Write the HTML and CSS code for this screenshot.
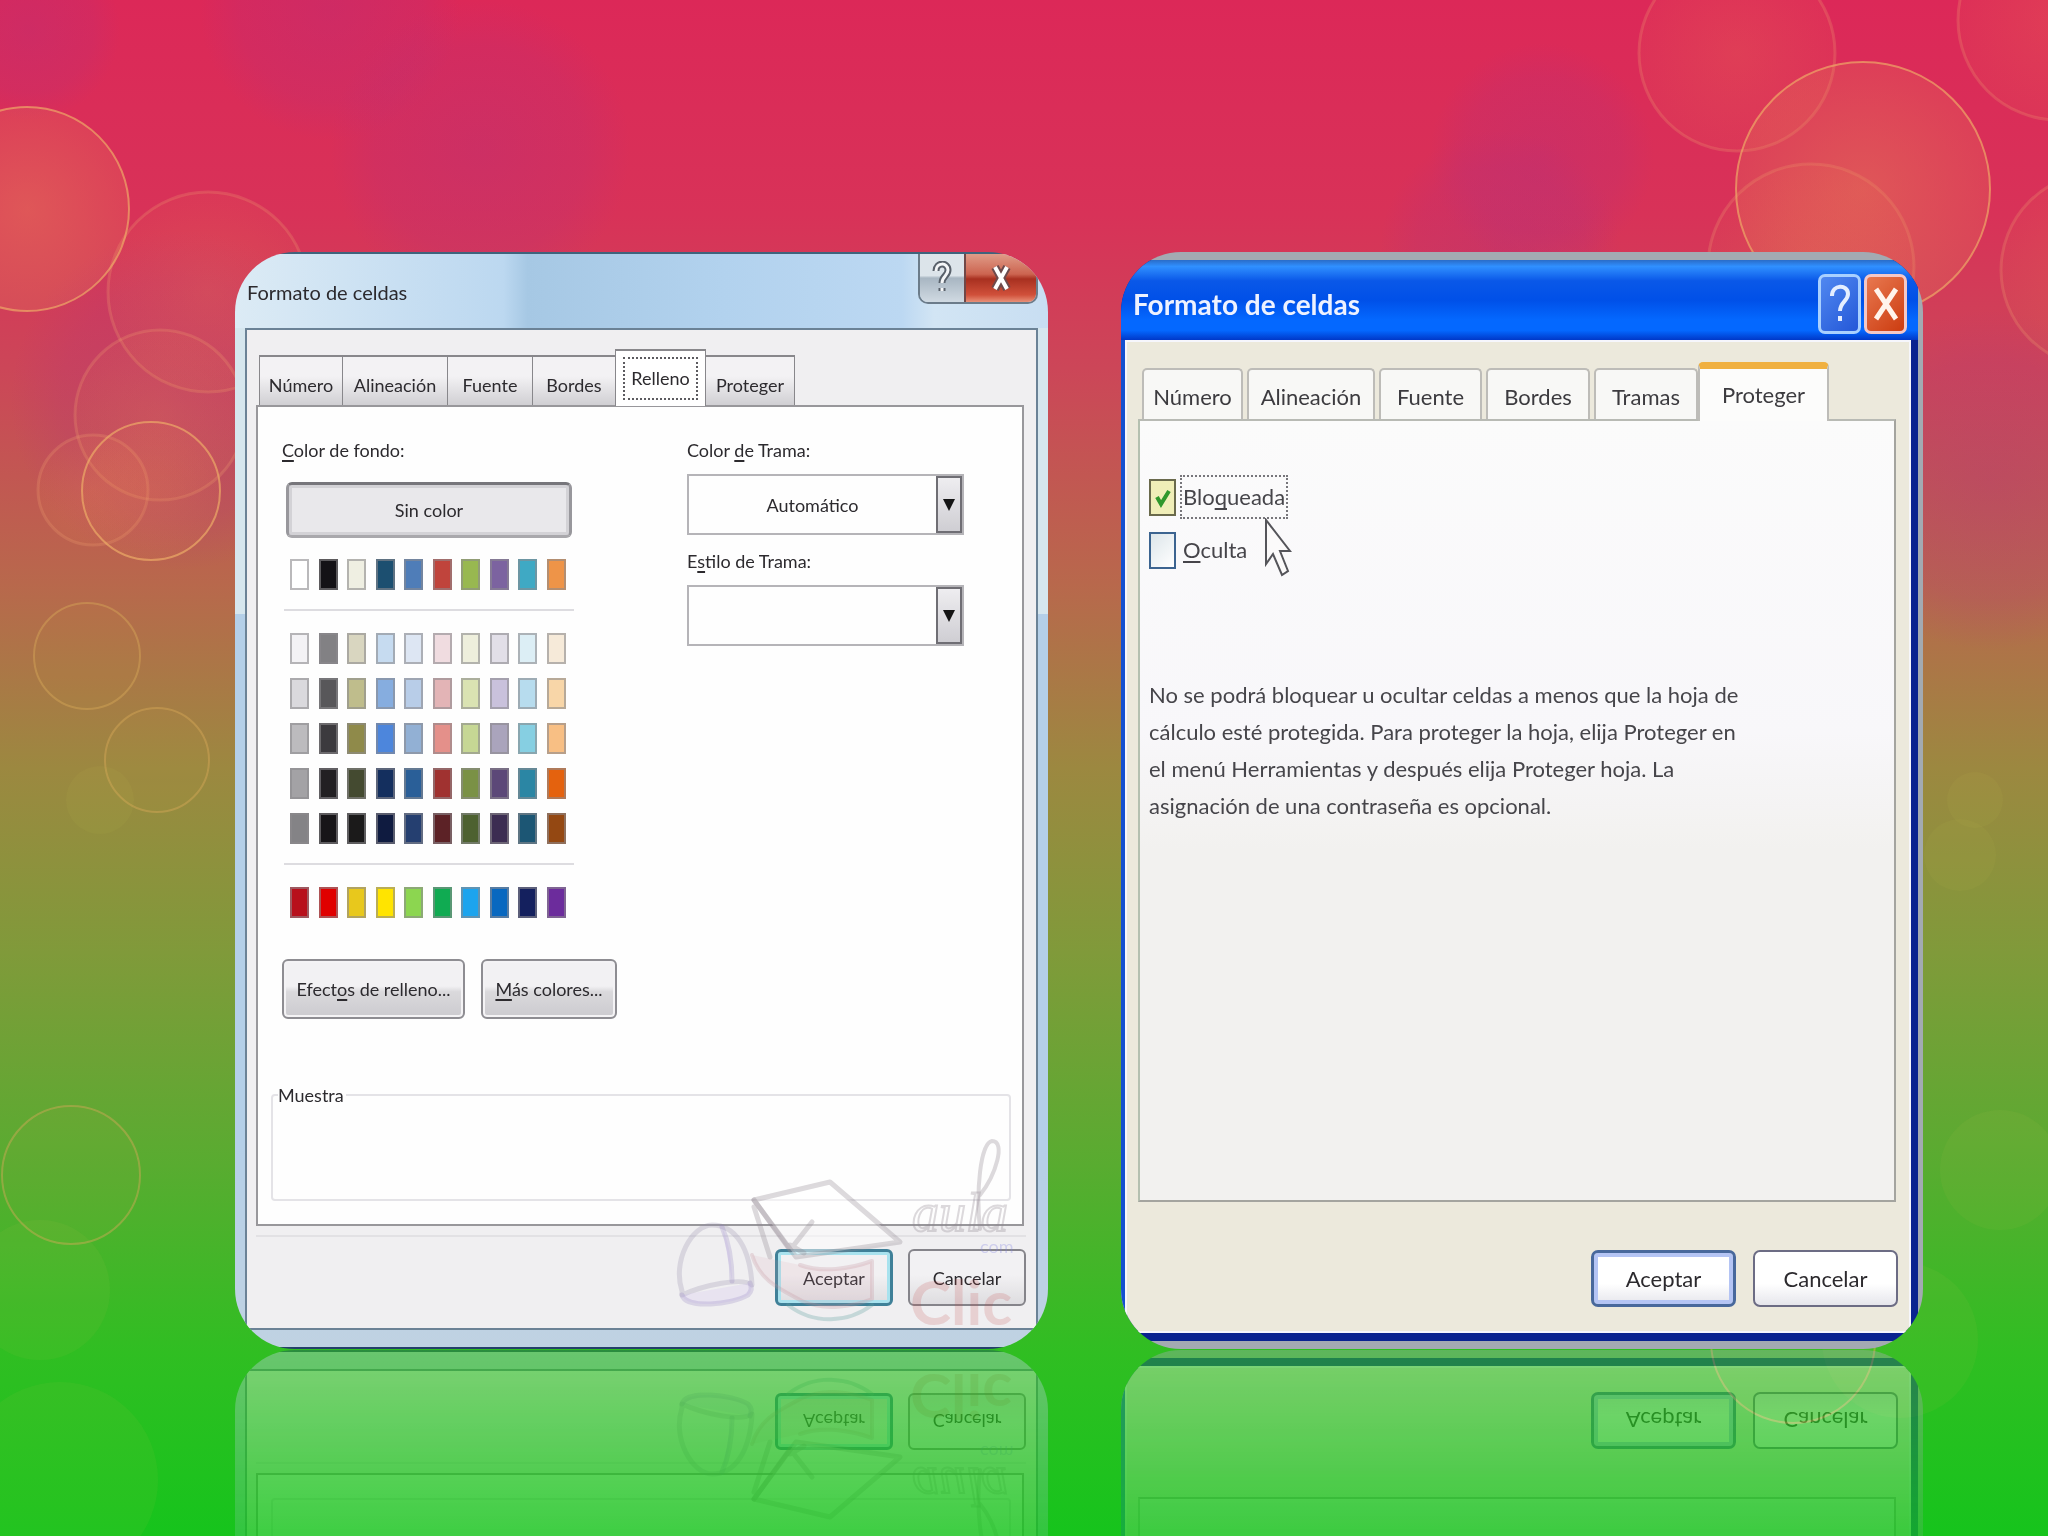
FILE: index.html
```html
<!DOCTYPE html>
<html lang="es">
<head>
<meta charset="utf-8">
<title>Formato de celdas</title>
<link rel="stylesheet" href="styles.css">
</head>
<body>
<main class="slide">
  <svg class="bokeh" viewBox="0 0 2048 1536" preserveAspectRatio="xMidYMid slice" aria-hidden="true">
    <defs>
      <radialGradient id="glow"><stop offset="0" stop-color="#f08a50" stop-opacity=".2"/><stop offset="1" stop-color="#f08a50" stop-opacity=".08"/></radialGradient>
      <radialGradient id="warm"><stop offset="0" stop-color="#e88a58" stop-opacity=".42"/><stop offset="1" stop-color="#e88a58" stop-opacity=".2"/></radialGradient>
      <radialGradient id="violet"><stop offset="0" stop-color="#b03080" stop-opacity=".3"/><stop offset=".7" stop-color="#b03080" stop-opacity=".18"/><stop offset="1" stop-color="#b03080" stop-opacity="0"/></radialGradient>
    </defs>
    <g fill="url(#violet)">
      <circle cx="1542" cy="155" r="112"/><circle cx="330" cy="10" r="130"/><circle cx="480" cy="150" r="150"/>
      <circle cx="1500" cy="250" r="120"/><circle cx="180" cy="400" r="170"/><circle cx="30" cy="30" r="90"/><circle cx="1990" cy="480" r="170"/>
    </g>
    <g fill="url(#glow)" stroke="#f0a070" stroke-opacity=".25" stroke-width="3">
      <circle cx="208" cy="292" r="100"/><circle cx="160" cy="415" r="85"/><circle cx="93" cy="490" r="55"/>
      <circle cx="1737" cy="53" r="98"/><circle cx="1811" cy="267" r="103"/><circle cx="2058" cy="20" r="100"/><circle cx="2098" cy="270" r="97"/>
    </g>
    <g stroke="#f0b068" stroke-opacity=".65" stroke-width="2">
      <circle cx="27" cy="209" r="102" fill="url(#warm)"/><circle cx="151" cy="491" r="69" fill="url(#glow)"/><circle cx="1863" cy="189" r="127" fill="url(#warm)"/>
    </g>
    <g fill="#c8b040" fill-opacity=".06" stroke="#d8a858" stroke-opacity=".45" stroke-width="2">
      <circle cx="87" cy="656" r="53"/><circle cx="157" cy="760" r="52"/><circle cx="71" cy="1175" r="69"/>
    </g>
    <g fill="#c0c850" fill-opacity=".07">
      <circle cx="100" cy="800" r="34"/><circle cx="1960" cy="855" r="36"/><circle cx="1975" cy="800" r="28"/>
      <circle cx="2000" cy="1170" r="60"/><circle cx="1900" cy="1340" r="78"/><circle cx="60" cy="1480" r="98"/><circle cx="40" cy="1290" r="70"/>
      <circle cx="1793" cy="1341" r="82" stroke="#d8b050" stroke-opacity=".5" stroke-width="2"/>
    </g>
  </svg>

  <section class="dialog aero" aria-label="Formato de celdas, Relleno">
    <header class="aero-title">
      <h1 class="aero-name">Formato de celdas</h1>
      <div class="aero-controls">
        <button class="aero-help" type="button" aria-label="Ayuda">
          <svg width="20" height="34" viewBox="0 0 20 34"><path d="M4 10C4 1 16 1 16 9c0 6-6 6-6 13M10 27v3" fill="none" stroke="#59616b" stroke-width="7"/><path d="M4 10C4 1 16 1 16 9c0 6-6 6-6 13M10 27v3" fill="none" stroke="#f4f6f8" stroke-width="3"/></svg>
        </button>
        <button class="aero-close" type="button" aria-label="Cerrar">
          <svg width="22" height="30" viewBox="0 0 22 30"><path d="M5 4l12 22M17 4L5 26" stroke="#6e4a4c" stroke-width="8"/><path d="M5 4l12 22M17 4L5 26" stroke="#fff" stroke-width="4"/></svg>
        </button>
      </div>
    </header>
    <div class="aero-client">
      <div class="aero-tabs" role="tablist">
        <button class="aero-tab" role="tab" type="button">Número</button>
        <button class="aero-tab" role="tab" type="button">Alineación</button>
        <button class="aero-tab" role="tab" type="button">Fuente</button>
        <button class="aero-tab" role="tab" type="button">Bordes</button>
        <button class="aero-tab is-active" role="tab" type="button" aria-selected="true"><span class="focus">Relleno</span></button>
        <button class="aero-tab" role="tab" type="button">Proteger</button>
      </div>
      <div class="aero-panel">
        <div class="fill-form">
          <div class="fill-color">
            <p class="caption"><u>C</u>olor de fondo:</p>
            <button class="no-color" type="button">Sin color</button>
            <div class="swatches" id="theme"></div>
            <hr class="rule">
            <div class="swatches" id="tints"></div>
            <hr class="rule">
            <div class="swatches" id="standard"></div>
            <div class="more">
              <button class="aero-button effects" type="button">Efect<u>o</u>s de relleno...</button>
              <button class="aero-button colors" type="button"><u>M</u>ás colores...</button>
            </div>
          </div>
          <div class="fill-pattern">
            <label class="caption" for="pcolor">Color <u>d</u>e Trama:</label>
            <div class="combo">
              <select id="pcolor"><option>Automático</option></select>
              <span class="combo-arrow"><svg width="12" height="14" viewBox="0 0 12 14"><path d="M0 1h12L6 13z" fill="#151515"/></svg></span>
            </div>
            <label class="caption caption-next" for="pstyle">E<u>s</u>tilo de Trama:</label>
            <div class="combo">
              <select id="pstyle"><option></option></select>
              <span class="combo-arrow"><svg width="12" height="14" viewBox="0 0 12 14"><path d="M0 1h12L6 13z" fill="#151515"/></svg></span>
            </div>
          </div>
        </div>
        <fieldset class="sample"><legend>Muestra</legend></fieldset>
      </div>
      <footer class="aero-footer">
        <button class="aero-action is-default" type="button">Aceptar</button>
        <button class="aero-action" type="button">Cancelar</button>
      </footer>
    </div>
    <svg class="watermark" width="364" height="232" viewBox="0 -56 364 232" aria-hidden="true">
      <g fill="none" stroke-linejoin="round" stroke-linecap="round">
        <path d="M84 37l76-18 70 60-104 15z" fill="#fff" fill-opacity=".5" stroke="#8d8490" stroke-opacity=".3" stroke-width="5"/>
        <path d="M84 37l36 50 22-28M120 82l14 8M84 44l16 50" stroke="#8d8490" stroke-opacity=".3" stroke-width="5"/>
        <path d="M82 92c8 26 28 34 50 46 22 10 50 6 70-2V98c-22 8-50 12-72 4" fill="#d8a0b0" fill-opacity=".15" stroke="#c08a98" stroke-opacity=".25" stroke-width="4"/>
        <path d="M118 142c26 20 60 18 84 0" stroke="#60a0a0" stroke-opacity=".3" stroke-width="4"/>
        <path d="M12 128C2 98 22 62 42 62c24 0 38 24 40 60-10-8-48 0-70 10z" stroke="#8f86a8" stroke-opacity=".25" stroke-width="5"/>
        <path d="M52 64c8 18 10 38 10 54M12 132c4 14 50 10 66 0 4-4 4-8 2-12" fill="#cfc0f0" fill-opacity=".25" stroke="#8f80c0" stroke-opacity=".25" stroke-width="5"/>
        <path d="M310 66C306 30 310-20 322-22c14 0 4 34-12 54" stroke="#8d8490" stroke-opacity=".3" stroke-width="4"/>
      </g>
      <text class="mark-aula" x="242" y="68">aula</text>
      <text class="mark-com" x="310" y="90">com</text>
      <text class="mark-clic" x="240" y="162">Clic</text>
    </svg>
  </section>

  <section class="dialog luna" aria-label="Formato de celdas, Proteger">
    <header class="luna-title">
      <h1 class="luna-name">Formato de celdas</h1>
      <div class="luna-controls">
        <button class="luna-help" type="button" aria-label="Ayuda">
          <svg width="24" height="40" viewBox="0 0 24 40"><path d="M4 12C4 0 20 0 20 10c0 7-8 8-8 17M12 32v5" fill="none" stroke="#e4eeff" stroke-width="4"/></svg>
        </button>
        <button class="luna-close" type="button" aria-label="Cerrar">
          <svg width="26" height="36" viewBox="0 0 26 36"><path d="M3 3l20 30M23 3L3 33" stroke="#fff4ec" stroke-width="5"/></svg>
        </button>
      </div>
    </header>
    <div class="luna-client">
      <div class="luna-tabs" role="tablist">
        <button class="luna-tab" role="tab" type="button">Número</button>
        <button class="luna-tab" role="tab" type="button">Alineación</button>
        <button class="luna-tab" role="tab" type="button">Fuente</button>
        <button class="luna-tab" role="tab" type="button">Bordes</button>
        <button class="luna-tab" role="tab" type="button">Tramas</button>
        <button class="luna-tab is-active" role="tab" type="button" aria-selected="true">Proteger</button>
      </div>
      <div class="luna-panel">
        <div class="check">
          <input type="checkbox" id="locked" checked>
          <label class="is-focused" for="locked">Blo<u>q</u>ueada</label>
          <svg class="pointer" width="28" height="60" viewBox="0 0 28 60" aria-hidden="true"><path d="M2 2v44l7-10 9 21 6-4-8-20h10z" fill="#fbfafa" stroke="#55555a" stroke-width="2"/></svg>
        </div>
        <div class="check">
          <input type="checkbox" id="hidden-cells">
          <label for="hidden-cells"><u>O</u>culta</label>
        </div>
        <p class="note">No se podrá bloquear u ocultar celdas a menos que la hoja de<br>cálculo esté protegida. Para proteger la hoja, elija Proteger en<br>el menú Herramientas y después elija Proteger hoja. La<br>asignación de una contraseña es opcional.</p>
      </div>
      <footer class="luna-footer">
        <button class="luna-action is-default" type="button">Aceptar</button>
        <button class="luna-action" type="button">Cancelar</button>
      </footer>
    </div>
  </section>
</main>
<script src="swatches.js"></script>
</body>
</html>
```
FILE: swatches.js
```js
const palettes = {
  theme: "#ffffff #141216 #efefe2 #1c4f70 #4f7db8 #c0443c #98b850 #7c63a0 #3fa9c4 #ee9448",
  tints: "#f3f2f5 #828184 #d9d6c0 #c6dbf0 #dde6f3 #f0dce0 #eeefdc #e2dfe8 #dceef5 #f6ead9 " +
    "#dad9dd #58575a #bfbd8c #86addf #b8cde8 #e3b4b6 #dae3b2 #c9c1dc #b7dcee #f8d6a8 " +
    "#bcbbbe #3c3a3e #8f8a4a #4d86dc #92b0d4 #e4908a #c6d794 #aaa4bc #86cfe2 #f8bf84 " +
    "#a3a2a5 #222023 #444a30 #142f5e #2a5f98 #a03230 #7a9145 #5c4878 #2b86a4 #e4620e " +
    "#848386 #171518 #1b1a1a #0f1b40 #253f70 #5c2226 #4d6130 #3c2d52 #1c5674 #944812",
  standard: "#b8101c #e00000 #e8c81c #ffe400 #8cd650 #10ab52 #1ca4ee #0868c0 #14205e #6c2c9c"
};

for (const [id, colors] of Object.entries(palettes)) {
  const holder = document.getElementById(id);
  for (const color of colors.split(" ")) {
    const swatch = document.createElement("button");
    swatch.type = "button";
    swatch.className = "swatch";
    swatch.style.backgroundColor = color;
    swatch.setAttribute("aria-label", "Color " + color);
    holder.append(swatch);
  }
}
```
FILE: styles.css
```css
* { box-sizing: border-box; }

body {
  margin: 0;
  font-family: Lato, "Open Sans", sans-serif;
  font-size: 18px;
  line-height: 28px;
  color: #2c2a2e;
}

h1, p { margin: 0; font-weight: normal; }

button {
  font: inherit;
  color: inherit;
  padding: 0;
  margin: 0;
  white-space: nowrap;
}

u { text-decoration-thickness: 2px; text-underline-offset: 3px; text-decoration-skip-ink: none; }

.slide {
  position: relative;
  overflow: hidden;
  height: 100vh;
  min-height: 1400px;
  padding: 252px 125px 0 235px;
  display: grid;
  grid-template-columns: 813fr 802fr;
  align-items: stretch;
  align-content: start;
  column-gap: 73px;
  background: linear-gradient(#dc2858 0%, #d83258 14%, #cc4658 24%, #b8684c 38%, #9c8840 50%, #809a3a 62%, #58ac30 76%, #30be22 88%, #16c41c 100%);
}

.bokeh {
  position: absolute;
  inset: 0;
  width: 100%;
  height: 100%;
}

.dialog {
  position: relative;
  display: flex;
  flex-direction: column;
  overflow: hidden;
  -webkit-box-reflect: below 1px linear-gradient(transparent 70%, rgba(0, 0, 0, .4));
}

/* Glass window */
.aero {
  border-radius: 60px;
  padding: 2px 10px 19px;
  background:
    linear-gradient(#3f637c, #3f637c) top / 100% 2px no-repeat,
    linear-gradient(#24406a, #24406a) bottom / 100% 2px no-repeat,
    linear-gradient(90deg, #dcebf5 0, #c8dff2 20%, #bcd8f0 33%, #a6c8e4 36%, #b2d2ee 60%, #bcd8f2 82%, #d2e5f4 86%, #c8def2 100%) top / 100% 76px no-repeat,
    linear-gradient(#d6e6ee 0 33%, #b4cfe8 33% 80%, #c0d2e2);
}

.aero-title {
  height: 74px;
  display: flex;
  justify-content: space-between;
  align-items: flex-start;
}

.aero-name { font-size: 20px; line-height: 28px; padding: 24px 0 0 2px; }

.aero-controls {
  display: flex;
  width: 120px;
  height: 50px;
  border: 2px solid #6c7c8a;
  border-top: 0;
  border-radius: 0 0 10px 10px;
  overflow: hidden;
}

.aero-help, .aero-close { border: 0; display: grid; place-items: center; }
.aero-help { width: 44px; background: linear-gradient(#dce4ea 0 45%, #a8b6c2 50%, #d0dae2); }
.aero-close { flex: 1; border-left: 2px solid #704848; background: linear-gradient(#e09c88 0, #cc6450 42%, #a83020 52%, #d0503a 85%, #e89078); }

.aero-client {
  border: 2px solid #6b8296;
  background: #f0eff1;
  padding: 19px 10px 22px 9px;
}

.aero-tabs {
  display: grid;
  grid-template-columns: 83px 105px 85px 83px 90px 89px;
  align-items: end;
  padding-left: 3px;
}

.aero-tab {
  height: 50px;
  margin-right: -1px;
  padding-top: 8px;
  border: 1px solid #88878b;
  border-width: 2px 1px 0;
  background: linear-gradient(#f3f2f4 0 40%, #d0cfd3);
}

.aero-tab.is-active {
  height: 57px;
  padding: 0;
  margin-bottom: -1px;
  position: relative;
  z-index: 1;
  background: #fff;
}

.focus { display: inline-block; padding: 5px 6px 6px; border: 2px dotted #5c5b60; }

.aero-panel {
  margin-right: 2px;
  border: 2px solid #98979b;
  background: #fefefe;
  padding: 29px 11px 23px 13px;
}

.fill-form {
  display: grid;
  grid-template-columns: 405fr 324fr;
  padding-left: 11px;
}

.caption { display: block; height: 28px; }

.no-color {
  display: block;
  width: 286px;
  height: 56px;
  margin: 18px 0 21px 4px;
  border: 3px solid #8c8b90;
  border-color: #77767b #98979c #a9a8ac;
  border-radius: 6px;
  background: #e9e8eb;
  box-shadow: inset 0 0 0 3px #d3d2d6;
}

.swatches {
  width: 276px;
  margin-left: 8px;
  display: grid;
  grid-template-columns: repeat(10, 19px);
  grid-auto-rows: 31px;
  justify-content: space-between;
  row-gap: 14px;
}

.swatch { border: 2px solid rgba(140, 138, 142, .6); }

.rule {
  width: 290px;
  height: 2px;
  margin: 19px 0 22px 2px;
  border: 0;
  background: #dddce0;
}

.more { display: flex; gap: 16px; margin-top: 41px; }

.aero-button {
  height: 60px;
  border: 2px solid #8e8d92;
  border-radius: 6px;
  background: linear-gradient(#f2f1f3 0 45%, #dad9dc 55%, #cccbcf);
  box-shadow: inset 0 0 0 2px #f4f3f5;
}

.effects { width: 183px; }
.colors { width: 136px; }

.combo {
  display: grid;
  grid-template-columns: 1fr 26px;
  width: 277px;
  height: 61px;
  margin-top: 10px;
  border: 2px solid #b5b4b8;
}

.combo select {
  appearance: none;
  width: 100%;
  border: 0;
  padding: 0;
  background: none;
  font: inherit;
  color: inherit;
  text-align-last: center;
}

.combo-arrow {
  display: grid;
  place-items: center;
  border: 2px solid #6f6e74;
  background: linear-gradient(#eeedf0, #cfced3);
}

.caption-next { margin-top: 12px; }

.sample {
  height: 120px;
  margin: 62px 0 0;
  padding: 0;
  border: 2px solid #e4e3e7;
  border-radius: 4px;
}

.sample legend { margin-left: 5px; padding: 0 2px 0 0; }

.aero-footer {
  display: flex;
  justify-content: flex-end;
  gap: 15px;
  margin-top: 9px;
  padding-top: 12px;
  border-top: 2px solid #e2e1e4;
}

.aero-action {
  width: 118px;
  height: 57px;
  border: 2px solid #85848a;
  border-radius: 6px;
  background: linear-gradient(#f2f1f3 0 45%, #dedde0);
}

.aero-action.is-default { border: 3px solid #3f8098; box-shadow: inset 0 0 0 3px #a8e2ee; }

.watermark { position: absolute; right: 14px; bottom: 10px; pointer-events: none; }
.mark-aula { font: italic 54px "Liberation Serif", serif; fill: none; stroke: #8d8490; stroke-opacity: .3; stroke-width: 2px; }
.mark-com { font-size: 18px; fill: #8080e0; fill-opacity: .3; }
.mark-clic { font-size: 62px; font-weight: bold; fill: #c04040; fill-opacity: .18; }

/* Blue window */
.luna {
  padding: 8px 5px 8px 0;
  border-radius: 60px;
  background:
    linear-gradient(#0a2390, #0a2390) 0 8px / calc(100% - 5px) calc(100% - 16px) no-repeat,
    #a3aab2;
}

.luna-title {
  height: 80px;
  display: flex;
  justify-content: space-between;
  align-items: center;
  padding: 8px 11px 0 12px;
  background: linear-gradient(#2a6cc8 0, #3090ff 8%, #0a58e8 26%, #0050e8 50%, #0468ff 75%, #0468ff 88%, #0038c8 100%);
}

.luna-name { font-size: 28px; line-height: 40px; font-weight: bold; color: #eef2ff; }

.luna-controls { display: flex; gap: 3px; }

.luna-help, .luna-close {
  width: 43px;
  height: 60px;
  display: grid;
  place-items: center;
  border: 3px solid #a8d0ff;
  border-radius: 7px;
}

.luna-help { background: linear-gradient(135deg, #5088f0, #2458d8); }
.luna-close { border-color: #f4c8c8; background: linear-gradient(135deg, #e87850, #cc3c10); }

.luna-client {
  flex: 1;
  display: flex;
  flex-direction: column;
  margin: 0 7px 8px 0;
  border: solid #1450d0;
  border-width: 0 0 0 4px;
  padding: 22px 13px 26px;
  background: #ece9dc;
  box-shadow: inset -2px -2px 0 #f6f6fc, inset 2px 2px 0 #f6f6fc;
}

.luna-tabs {
  display: grid;
  grid-template-columns: 101px 128px 103px 104px 104px 127px;
  column-gap: 4px;
  align-items: end;
  padding-left: 4px;
}

.luna-tab {
  height: 51px;
  border: 2px solid #bdbcb8;
  border-bottom: 0;
  border-radius: 5px 5px 0 0;
  background: #f8f8f6;
  padding-top: 5px;
  font-size: 22px;
  color: #3c3b3f;
}

.luna-tab.is-active {
  position: relative;
  z-index: 1;
  height: 59px;
  margin: 0 0 -2px -4px;
  border-top: 7px solid #f0b040;
  background: #fcfcfb;
  padding-top: 0;
}

.luna-panel {
  flex: 1;
  margin-right: 2px;
  border: 2px solid #aeb0aa;
  border-color: #b8bab4 #a4a49f #a4a49f #b4c0b0;
  padding: 54px 9px 0;
  background: linear-gradient(#fbfbfb, #f8f7fa 40%, #f2f1ef 55%, #f2f1ef);
}

.check {
  position: relative;
  display: flex;
  align-items: center;
  height: 44px;
  margin-bottom: 9px;
  gap: 4px;
  font-size: 22px;
}

.check input {
  appearance: none;
  width: 27px;
  height: 37px;
  margin: 0;
  border: 2px solid #3c6490;
  background: linear-gradient(135deg, #dde6ea, #fff);
}

.check input:checked {
  border-color: #6a6a4c;
  background: url("data:image/svg+xml,%3Csvg xmlns='http://www.w3.org/2000/svg' viewBox='0 0 23 33'%3E%3Cpath d='M6 16l4 7 8-13' fill='none' stroke='%2330982c' stroke-width='4'/%3E%3C/svg%3E") center / 23px 33px no-repeat, #f0eeb8;
}

.check label { padding: 6px 1px; border: 2px dotted transparent; line-height: 28px; color: #46454a; }
.check label.is-focused { border-color: #77767b; }

.pointer { position: absolute; left: 115px; top: 43px; z-index: 1; }

.note { margin-top: 104px; font-size: 22px; line-height: 37px; color: #46454a; }

.luna-footer { display: flex; justify-content: flex-end; gap: 17px; padding-top: 48px; }

.luna-action {
  width: 145px;
  height: 57px;
  border: 2px solid #6c6c84;
  border-radius: 7px;
  background: linear-gradient(#fff 0 60%, #e6e6ec);
  font-size: 22px;
}

.luna-action.is-default { border: 3px solid #48689c; box-shadow: inset 0 0 0 4px #b4c4f4; }
```
